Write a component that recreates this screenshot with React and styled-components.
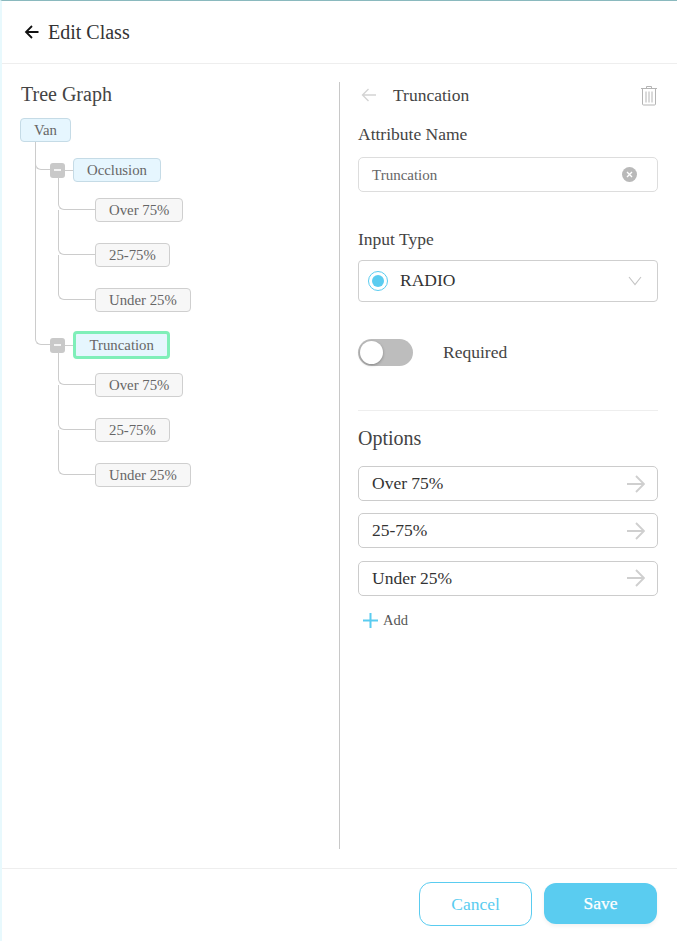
import React from "react"
import styled, { createGlobalStyle } from "styled-components"

const tree = [
  { name: "Occlusion", rise: 16, height: 28, options: ["Over 75%", "25-75%", "Under 25%"] },
  { name: "Truncation", rise: 170, height: 184, active: true, options: ["Over 75%", "25-75%", "Under 25%"] },
]

const options = ["Over 75%", "25-75%", "Under 25%"]

const App = () => {
  return (
    <Page>
      <GlobalStyle />
      <Header>
        <svg width="16" height="16" viewBox="0 0 16 16" fill="none" stroke="#111" strokeWidth="1.8">
          <path d="M14.5 8H2M8 2 2 8l6 6" />
        </svg>
        <HeaderTitle>Edit Class</HeaderTitle>
      </Header>
      <Main>
        <TreePanel>
          <TreeTitle>Tree Graph</TreeTitle>
          <Node $root>Van</Node>
          <Groups>
            {tree.map(group => (
              <Group key={group.name}>
                <Elbow $width={15} $rise={group.rise} $height={group.height} />
                <div>
                  <GroupHead>
                    <Toggle />
                    <Stub />
                    <Node $root $active={group.active}>{group.name}</Node>
                  </GroupHead>
                  <Leaves $active={group.active}>
                    {group.options.map((option, i) => (
                      <Leaf key={option}>
                        <Elbow $width={37} $rise={i === 0 ? 21 : 33} $height={i === 0 ? 33 : 45} />
                        <Node>{option}</Node>
                      </Leaf>
                    ))}
                  </Leaves>
                </div>
              </Group>
            ))}
          </Groups>
        </TreePanel>
        <EditPanel>
          <PanelHead>
            <svg width="16" height="14" viewBox="0 0 16 14" fill="none" stroke="#d4d4d4" strokeWidth="1.4">
              <path d="M15 7H1.5M7.5 1 1.5 7l6 6" />
            </svg>
            <PanelTitle>Truncation</PanelTitle>
            <TrashIcon width="18" height="21" viewBox="0 0 18 21" fill="none" stroke="#b4b4b4" strokeWidth="1">
              <path d="M1 3.5h16M6.5 3.5V1.5h5v2M2.5 3.5v15.5a1 1 0 0 0 1 1h11a1 1 0 0 0 1-1V3.5M6 6.5v11M9 6.5v11M12 6.5v11" />
            </TrashIcon>
          </PanelHead>
          <FieldLabel>Attribute Name</FieldLabel>
          <NameInput>
            <NameValue>Truncation</NameValue>
            <svg width="15" height="15" viewBox="0 0 15 15">
              <circle cx="7.5" cy="7.5" r="7.5" fill="#b9b9b9" />
              <path d="M5 5l5 5M10 5l-5 5" stroke="#fff" strokeWidth="1.4" />
            </svg>
          </NameInput>
          <TypeLabel>Input Type</TypeLabel>
          <TypeSelect>
            <RadioMark />
            <TypeValue>RADIO</TypeValue>
            <svg width="14" height="10" viewBox="0 0 14 10" fill="none" stroke="#c4c4c4" strokeWidth="1.1">
              <path d="M1 1l6 7.5L13 1" />
            </svg>
          </TypeSelect>
          <RequiredRow>
            <Switch>
              <Knob />
            </Switch>
            <RequiredText>Required</RequiredText>
          </RequiredRow>
          <Rule />
          <OptionsTitle>Options</OptionsTitle>
          <OptionList>
            {options.map(option => (
              <OptionRow key={option}>
                <span>{option}</span>
                <svg width="19" height="18" viewBox="0 0 19 18" fill="none" stroke="#cfcfcf" strokeWidth="1.9">
                  <path d="M1 9H18M10 1l8 8-8 8" />
                </svg>
              </OptionRow>
            ))}
          </OptionList>
          <AddRow>
            <svg width="15" height="15" viewBox="0 0 15 15" stroke="#5accf0" strokeWidth="2">
              <path d="M0 7.5h15M7.5 0v15" />
            </svg>
            <span>Add</span>
          </AddRow>
        </EditPanel>
      </Main>
      <Footer>
        <CancelButton>Cancel</CancelButton>
        <SaveButton>Save</SaveButton>
      </Footer>
    </Page>
  )
}

const GlobalStyle = createGlobalStyle`
  html, body {
    margin: 0;
    padding: 0;
    background: #fff;
  }
  * {
    box-sizing: border-box;
  }
`

const Page = styled.div`
  width: 677px;
  height: 941px;
  display: flex;
  flex-direction: column;
  overflow: hidden;
  background: #fff;
  border-top: 1px solid #8ab9be;
  border-left: 2px solid #e8f9fd;
  font-family: "Liberation Serif", "Times New Roman", serif;
  color: #333;
`

const Header = styled.div`
  height: 63px;
  flex: none;
  display: flex;
  align-items: center;
  gap: 8px;
  padding: 0 0 0 22px;
  border-bottom: 1px solid #eeeeee;
`

const HeaderTitle = styled.div`
  font-size: 20px;
  margin-top: 1px;
  color: #333;
`

const Main = styled.div`
  flex: 1;
  display: flex;
  align-items: flex-start;
  padding-top: 18px;
`

const TreePanel = styled.div`
  width: 338px;
  height: 767px;
  flex: none;
  padding-left: 18px;
  border-right: 1px solid #c8c8c8;
`

const TreeTitle = styled.div`
  font-size: 20px;
  line-height: 22px;
  margin: 1px 0 13px 1px;
  color: #444;
`

const Node = styled.div`
  width: fit-content;
  height: ${p => (p.$active ? 28 : 24)}px;
  display: flex;
  align-items: center;
  padding: 0 ${p => (p.$active ? 13.5 : 13)}px;
  font-size: 14.8px;
  color: #666;
  white-space: nowrap;
  border-radius: 4px;
  border: ${p => (p.$active ? "3px solid #7fefb9" : "1px solid #cfcfcf")};
  border-color: ${p => (p.$active ? "#7fefb9" : p.$root ? "#c5dbe6" : "#cfcfcf")};
  background: ${p => (p.$root ? "#e6f6fe" : "#f7f7f7")};
`

const Groups = styled.div`
  display: flex;
  flex-direction: column;
  gap: 19px;
  margin: 16px 0 0 15px;
`

const Group = styled.div`
  display: flex;
  align-items: flex-start;
`

const Elbow = styled.div`
  flex: none;
  width: ${p => p.$width}px;
  height: ${p => p.$height}px;
  margin-top: -${p => p.$rise}px;
  border-left: 1px solid #cccccc;
  border-bottom: 1px solid #cccccc;
  border-bottom-left-radius: 6px;
`

const GroupHead = styled.div`
  display: flex;
  align-items: center;
`

const Toggle = styled.div`
  width: 15px;
  height: 15px;
  flex: none;
  display: flex;
  align-items: center;
  justify-content: center;
  background: #c9c9c9;
  border-radius: 3px;
  &::after {
    content: "";
    width: 7px;
    height: 2px;
    background: #f4f4f4;
  }
`

const Stub = styled.div`
  width: 8px;
  height: 1px;
  background: #cccccc;
`

const Leaves = styled.div`
  display: flex;
  flex-direction: column;
  gap: 21px;
  margin: ${p => (p.$active ? 14 : 16)}px 0 0 8px;
`

const Leaf = styled.div`
  display: flex;
  align-items: flex-start;
`

const EditPanel = styled.div`
  flex: 1;
  padding: 0 19px 0 18px;
`

const PanelHead = styled.div`
  height: 28px;
  display: flex;
  align-items: center;
  padding: 0 0 2px 3px;
`

const PanelTitle = styled.div`
  flex: 1;
  margin-left: 16px;
  font-size: 17.5px;
  color: #444;
`

const TrashIcon = styled.svg`
  display: block;
`

const FieldLabel = styled.div`
  margin-top: 14px;
  font-size: 17.5px;
  line-height: 20px;
  color: #444;
`

const NameInput = styled.div`
  height: 35px;
  margin-top: 13px;
  display: flex;
  align-items: center;
  justify-content: space-between;
  padding: 0 20px 0 13px;
  border: 1px solid #dddddd;
  border-radius: 5px;
`

const NameValue = styled.span`
  margin-top: 2px;
  font-size: 15px;
  color: #666;
`

const TypeLabel = styled(FieldLabel)`
  margin-top: 37px;
`

const TypeSelect = styled.div`
  height: 42px;
  margin-top: 11px;
  display: flex;
  align-items: center;
  padding: 0 15px 0 9px;
  border: 1px solid #cfcfcf;
  border-radius: 4px;
`

const RadioMark = styled.div`
  width: 20px;
  height: 20px;
  flex: none;
  border-radius: 50%;
  border: 1.5px solid #5accf0;
  display: flex;
  align-items: center;
  justify-content: center;
  &::after {
    content: "";
    width: 12px;
    height: 12px;
    border-radius: 50%;
    background: #5accf0;
  }
`

const TypeValue = styled.span`
  flex: 1;
  margin: 0 0 2px 12px;
  font-size: 17.5px;
  color: #333;
`

const RequiredRow = styled.div`
  margin-top: 37px;
  display: flex;
  align-items: center;
  gap: 30px;
`

const Switch = styled.div`
  width: 55px;
  height: 27px;
  display: flex;
  align-items: center;
  padding-left: 2px;
  border-radius: 14px;
  background: #bdbdbd;
`

const Knob = styled.div`
  width: 23px;
  height: 23px;
  border-radius: 50%;
  background: #fff;
  box-shadow: 0 1px 3px rgba(0, 0, 0, 0.3);
`

const RequiredText = styled.span`
  font-size: 17.5px;
  color: #444;
`

const Rule = styled.div`
  height: 1px;
  margin-top: 44px;
  background: #eeeeee;
`

const OptionsTitle = styled.div`
  margin-top: 16px;
  font-size: 20px;
  line-height: 22px;
  color: #444;
`

const OptionList = styled.div`
  margin-top: 17px;
  display: flex;
  flex-direction: column;
  gap: 12.4px;
`

const OptionRow = styled.div`
  height: 35px;
  display: flex;
  align-items: center;
  justify-content: space-between;
  padding: 0 12px 0 13px;
  border: 1px solid #cccccc;
  border-radius: 5px;
  font-size: 17.5px;
  color: #333;
`

const AddRow = styled.div`
  margin-top: 16px;
  display: flex;
  align-items: center;
  gap: 5px;
  padding-left: 5px;
  font-size: 14.5px;
  color: #555;
`

const Footer = styled.div`
  height: 73px;
  flex: none;
  display: flex;
  align-items: flex-start;
  justify-content: flex-end;
  gap: 12px;
  padding: 13px 20px 0 0;
  border-top: 1px solid #eeeeee;
`

const CancelButton = styled.div`
  width: 113px;
  height: 44px;
  display: flex;
  align-items: center;
  justify-content: center;
  font-size: 17.5px;
  color: #5accf0;
  border: 1px solid #5accf0;
  border-radius: 12px;
`

const SaveButton = styled.div`
  width: 113px;
  height: 41px;
  margin-top: 1px;
  display: flex;
  align-items: center;
  justify-content: center;
  font-size: 17.5px;
  color: #fff;
  -webkit-text-stroke: 0.25px #fff;
  background: #5accf0;
  border-radius: 12px;
  box-shadow: 0 2px 4px rgba(0, 0, 0, 0.06);
`

export default App
